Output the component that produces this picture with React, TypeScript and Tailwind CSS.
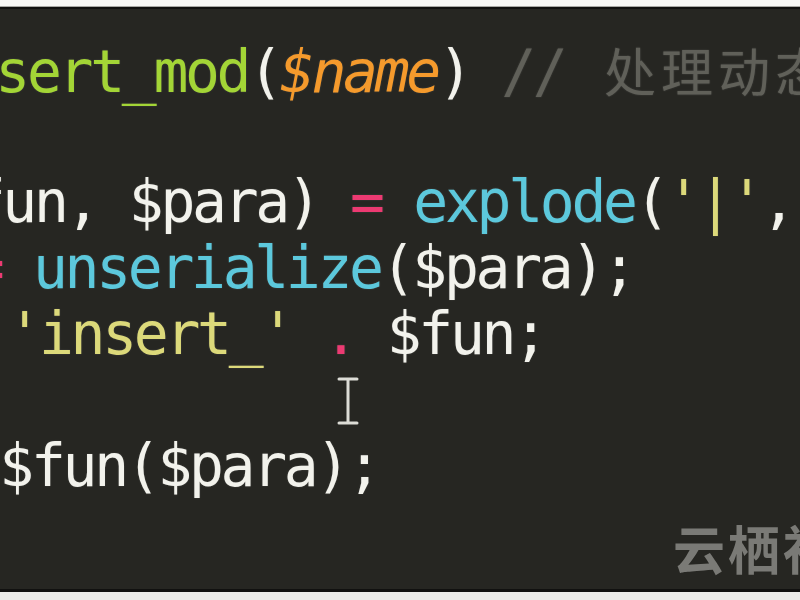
const white = "text-[#f2f2ec]";
const pink = "text-[#ec3a72]";
const green = "text-[#a3d536]";
const cyan = "text-[#5cc8dc]";
const yellow = "text-[#dcd97a]";
const orange = "text-[#f59a2c] italic";
const gray = "text-[#606059]";

type Tok = [string, string];

// small per-line nudges: the source is a photo of a screen, so columns drift a little
const nudge = ["ml-[-4px]", "", "ml-[3px]", "ml-[2px]", "ml-[8px]", "", ""];

const lines: Tok[][] = [
  [
    [cyan + " italic", "    function "],
    [green, "insert_mod"],
    [white, "("],
    [orange, "$name"],
    [white, ")"],
    [gray, " // "],
  ],
  [[white, "    {"]],
  [
    [cyan, "        list"],
    [white, "($fun, $para) "],
    [pink, "="],
    [white, " "],
    [cyan, "explode"],
    [white, "("],
    [yellow, "'|'"],
    [white, ", $name);"],
  ],
  [
    [white, "        $para "],
    [pink, "="],
    [white, " "],
    [cyan, "unserialize"],
    [white, "($para);"],
  ],
  [
    [white, "        $fun "],
    [pink, "="],
    [white, " "],
    [yellow, "'insert_'"],
    [white, " "],
    [pink, "."],
    [white, " $fun;"],
  ],
  [],
  [
    [pink, "        return"],
    [white, " $fun($para);"],
  ],
];

function CodeLine({ toks, shift, comment }: { toks: Tok[]; shift: string; comment?: string }) {
  return (
    <div className={"h-[66px] whitespace-pre " + shift}>
      {toks.map(([cls, text], i) => (
        <span key={i} className={cls}>
          {text}
        </span>
      ))}
      {comment && (
        <span className="ml-[8px] text-[#606059] text-[52px] tracking-[5px] font-['Noto_Sans_CJK_SC',sans-serif]">
          {comment}
        </span>
      )}
    </div>
  );
}

export default function App() {
  return (
    <div className="w-[800px] h-[600px] flex flex-col overflow-hidden bg-[#f8f8f6]">
      <div className="h-[6px] bg-[#f8f8f6]" />
      <div className="h-[1px] bg-[#a9a9a5]" />
      <div className="h-[2px] bg-[#111110]" />
      <main className="relative flex-1 overflow-hidden bg-[#262622] pt-[28px]">
        <div className="ml-[-475px] text-[58px] leading-[66px] tracking-[-3.3px] font-['DejaVu_Sans_Mono',monospace] [text-shadow:0_0_2px_rgba(255,255,255,0.15)]">
          {lines.map((toks, i) => (
            <CodeLine
              key={i}
              toks={toks}
              shift={nudge[i]}
              comment={i === 0 ? "处理动态内容" : undefined}
            />
          ))}
        </div>

        {/* text cursor */}
        <svg
          className="absolute left-[336px] top-[366px]"
          width="26"
          height="52"
          viewBox="0 0 26 52"
        >
          <g stroke="#dcdcd6" strokeWidth="3" strokeLinecap="round" fill="none">
            <path d="M3 4h18M3 48h18M12 4v44" />
          </g>
        </svg>

        {/* watermark */}
        <div className="absolute left-[673px] top-[513px] whitespace-nowrap text-[52px] leading-none font-bold tracking-[3px] text-[#7a7a76] font-['Noto_Sans_CJK_SC',sans-serif]">
          云栖社区
        </div>
      </main>
      <div className="h-[3px] bg-[#111110]" />
      <div className="h-[8px] bg-[#ecece9]" />
    </div>
  );
}
